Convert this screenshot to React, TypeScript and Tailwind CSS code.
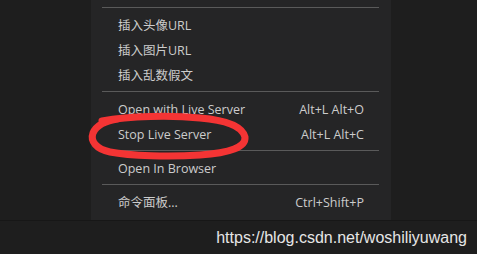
import React from "react";

type Item = { label: string; shortcut?: string };

const groups: Item[][] = [
  [{ label: "插入头像URL" }, { label: "插入图片URL" }, { label: "插入乱数假文" }],
  [
    { label: "Open with Live Server", shortcut: "Alt+L Alt+O" },
    { label: "Stop Live Server", shortcut: "Alt+L Alt+C" },
  ],
  [{ label: "Open In Browser" }],
  [{ label: "命令面板...", shortcut: "Ctrl+Shift+P" }],
];

const menuFont = {
  fontFamily: '"Open Sans", "Noto Sans CJK SC", sans-serif',
};

function Separator() {
  return <div className="h-px bg-[#5a5a5a] ml-[11px] mr-[12px] my-[4px]" />;
}

export default function App() {
  return (
    <div className="relative w-[477px] h-[254px] bg-[#1e1e1e] overflow-hidden flex flex-col">
      <div className="h-[220px] flex">
        <div
          className="ml-[91px] w-[300px] h-full bg-[#252526] pt-[3px] text-[12.5px] text-[#cccccc]"
          style={menuFont}
        >
          {groups.map((g, gi) => (
            <div key={gi}>
              <Separator />
              {g.map((it) => (
                <div key={it.label} className="h-[25px] flex items-center justify-between pt-[3px] pl-[27px] pr-[27px]">
                  <span>{it.label}</span>
                  {it.shortcut && <span>{it.shortcut}</span>}
                </div>
              ))}
            </div>
          ))}
        </div>
      </div>
      <div className="flex-1 border-t border-[#171717] bg-[#1e1e1e] flex items-center justify-end pr-[10px]">
        <span
          className="text-[16px] leading-none text-[#e6e6e6]"
          style={{ fontFamily: '"Liberation Sans", Arial, sans-serif' }}
        >
          https://blog.csdn.net/woshiliyuwang
        </span>
      </div>
      <svg className="absolute left-0 top-0 pointer-events-none" width="477" height="254" viewBox="0 0 477 254">
        <path
          d="M102 121 C130 116 170 115 200 118 C225 120 242 126 245 137 C246 147 230 153 200 155 C170 157 130 156 110 152 C96 149 90 141 93 133 C96 126 104 121 118 119"
          fill="none"
          stroke="#f43434"
          strokeWidth="7"
          strokeLinecap="round"
        />
      </svg>
    </div>
  );
}
